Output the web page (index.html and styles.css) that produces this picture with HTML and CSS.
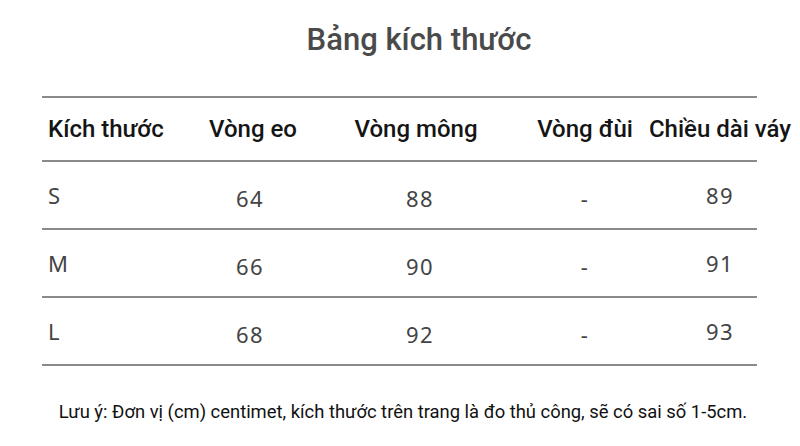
FILE: index.html
```html
<!DOCTYPE html>
<html lang="vi">
<head>
<meta charset="utf-8">
<link rel="stylesheet" href="styles.css">
</head>
<body>
<div class="page">
  <h1 class="title">Bảng kích thước</h1>
  <div class="table">
    <div class="row head">
      <div class="cell first">Kích thước</div>
      <div class="cell nudge-right">Vòng eo</div>
      <div class="cell nudge-left">Vòng mông</div>
      <div class="cell">Vòng đùi</div>
      <div class="cell">Chiều dài váy</div>
    </div>
    <div class="row data">
      <div class="cell first">S</div>
      <div class="cell mid">64</div>
      <div class="cell mid">88</div>
      <div class="cell mid">-</div>
      <div class="cell">89</div>
    </div>
    <div class="row data">
      <div class="cell first">M</div>
      <div class="cell mid">66</div>
      <div class="cell mid">90</div>
      <div class="cell mid">-</div>
      <div class="cell">91</div>
    </div>
    <div class="row data">
      <div class="cell first">L</div>
      <div class="cell mid">68</div>
      <div class="cell mid">92</div>
      <div class="cell mid">-</div>
      <div class="cell">93</div>
    </div>
  </div>
  <p class="note">Lưu ý: Đơn vị (cm) centimet, kích thước trên trang là đo thủ công, sẽ có sai số 1-5cm.</p>
</div>
</body>
</html>
```
FILE: styles.css
```css
html, body {
  margin: 0;
  padding: 0;
  background: #ffffff;
}
body {
  font-family: Roboto, "Noto Sans", sans-serif;
  width: 800px;
  height: 446px;
  overflow: hidden;
}
.page {
  display: flex;
  flex-direction: column;
  align-items: flex-start;
}
.title {
  margin: 20px 0 0 0;
  width: 838px;
  text-align: center;
  font-size: 31px;
  line-height: 40px;
  font-weight: 500;
  color: #4a4a4a;
}
.table {
  margin: 36px 0 0 42px;
  width: 715px;
  border-top: 2px solid #8a8a8a;
}
.row {
  display: grid;
  grid-template-columns: 143px 130px 210px 120px 150px;
  align-items: center;
  border-bottom: 2px solid #8a8a8a;
}
.row.head {
  height: 62px;
  font-size: 24px;
  font-weight: 500;
  color: #151515;
}
.row.data {
  height: 66px;
  font-family: "Noto Sans", sans-serif;
  font-size: 22px;
  letter-spacing: 1.5px;
  color: #444444;
}
.cell {
  text-align: center;
  white-space: nowrap;
}
.cell.first {
  text-align: left;
  padding-left: 6px;
}
.cell.mid {
  padding-top: 5px;
}
.cell.nudge-right {
  padding-left: 6px;
}
.cell.nudge-left {
  padding-right: 8px;
}
.note {
  margin: 35px 0 0 0;
  width: 806px;
  text-align: center;
  font-size: 18.4px;
  line-height: 22px;
  color: #111111;
}
```
